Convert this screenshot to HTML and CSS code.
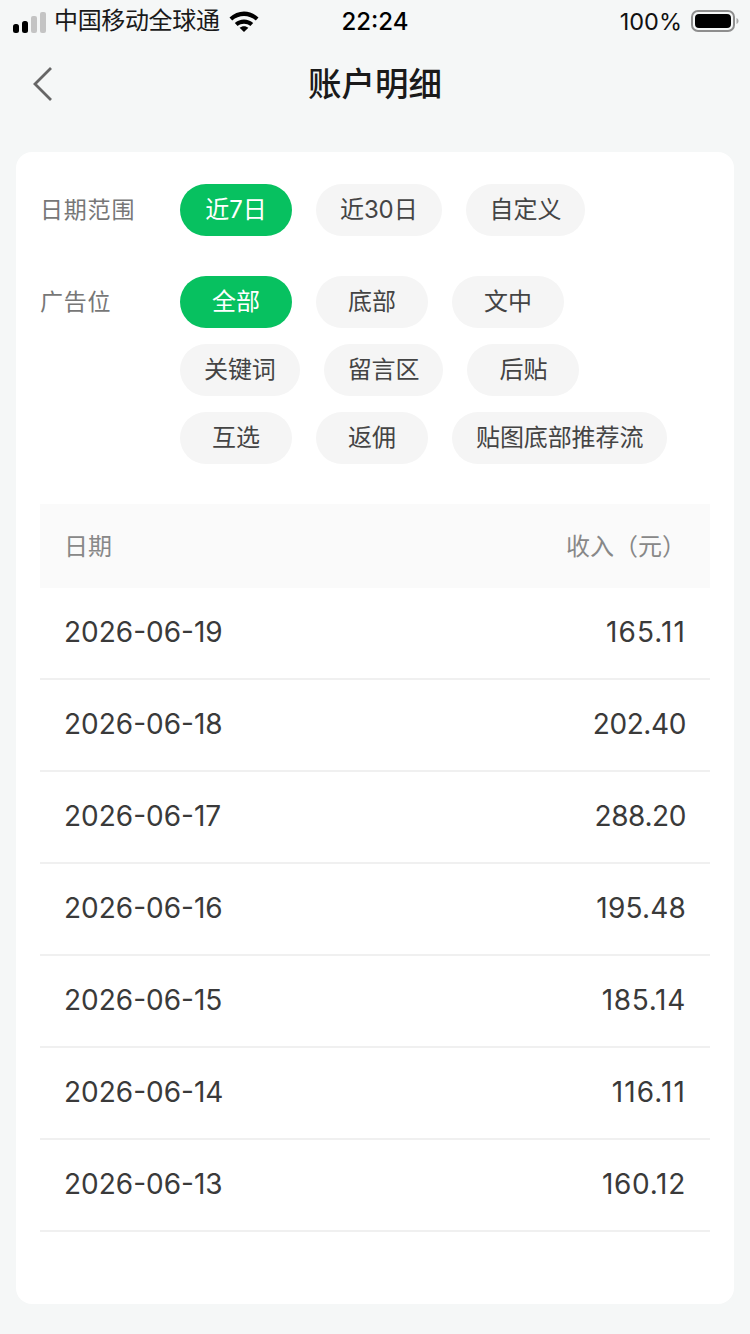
FILE: index.html
```html
<!DOCTYPE html>
<html lang="zh-CN">
<head>
<meta charset="utf-8">
<title>账户明细</title>
<link rel="stylesheet" href="styles.css">
</head>
<body>
<div class="status">
  <div class="status-left">
    <svg class="signal" width="34" height="34" viewBox="0 0 34 34"><rect x="1" y="22" width="6" height="9" rx="2.500" fill="#000"/><rect x="10" y="19" width="6" height="12" rx="2.500" fill="#000"/><rect x="19" y="14" width="6" height="17" rx="2" fill="#c4c4c4"/><rect x="28" y="10" width="6" height="21" rx="2" fill="#c4c4c4"/></svg>
    <span class="carrier">中国移动全球通</span>
    <svg class="wifi" width="30" height="22" viewBox="0 0 30 22"><path d="M.5 7.500C8.800-.5 21.200-.5 29.500 7.500l-2.700 3C20.200 4.500 9.800 4.500 3.200 10.500z" fill="#000"/><path d="M5.800 13C10.800 8.300 19.200 8.300 24.200 13l-2.800 3.100c-3.500-3.200-9.300-3.200-12.800 0z" fill="#000"/><path d="M10.600 17.700c2.500-2.100 6.300-2.100 8.800 0L15 22z" fill="#000"/></svg>
  </div>
  <div class="time">22:24</div>
  <div class="status-right">
    <span class="percent">100%</span>
    <svg class="battery" width="48" height="24" viewBox="0 0 48 24"><rect x="1" y="2" width="42" height="20" rx="6" fill="none" stroke="#8e8e8e" stroke-width="2"/><rect x="4" y="5" width="36" height="14" rx="4" fill="#000"/><path d="M45.500 9v6c1.300-.5 2-1.700 2-3s-.7-2.500-2-3z" fill="#a8a8a8"/></svg>
  </div>
</div>
<header class="nav">
  <svg class="back" width="24" height="36" viewBox="0 0 24 36"><path d="M21 2 5 18l16 16" fill="none" stroke="#666" stroke-width="2.800"/></svg>
  <h1 class="title">账户明细</h1>
</header>
<main class="card">
  <section class="filter">
    <div class="label">日期范围</div>
    <div class="chips">
      <span class="chip on">近7日</span><span class="chip">近30日</span><span class="chip">自定义</span>
    </div>
  </section>
  <section class="filter">
    <div class="label">广告位</div>
    <div class="chips">
      <span class="chip on">全部</span><span class="chip">底部</span><span class="chip">文中</span>
      <span class="chip">关键词</span><span class="chip">留言区</span><span class="chip">后贴</span>
      <span class="chip">互选</span><span class="chip">返佣</span><span class="chip">贴图底部推荐流</span>
    </div>
  </section>
  <section class="table">
    <div class="thead"><span>日期</span><span>收入（元）</span></div>
    <div class="row"><span class="date">2026-06-19</span><span class="amount wider">165.11</span></div>
    <div class="row"><span class="date">2026-06-18</span><span class="amount tight">202.40</span></div>
    <div class="row"><span class="date">2026-06-17</span><span class="amount tight">288.20</span></div>
    <div class="row"><span class="date">2026-06-16</span><span class="amount">195.48</span></div>
    <div class="row"><span class="date">2026-06-15</span><span class="amount wide">185.14</span></div>
    <div class="row"><span class="date">2026-06-14</span><span class="amount wider">116.11</span></div>
    <div class="row"><span class="date">2026-06-13</span><span class="amount wide">160.12</span></div>
  </section>
</main>
</body>
</html>
```
FILE: styles.css
```css
* { box-sizing: border-box; margin: 0; padding: 0; }
html, body { width: 750px; height: 1334px; overflow: hidden; }
body {
  background: #f5f7f7;
  font-family: Inter, "Noto Sans CJK SC", sans-serif;
  color: #333;
}
.status {
  height: 40px;
  display: grid;
  grid-template-columns: 1fr auto 1fr;
  align-items: center;
  padding: 0 11px 0 12px;
  color: #000;
}
.status-left { display: flex; align-items: center; }
.signal { margin-right: 8px; margin-top: -4px; }
.carrier { font-size: 24px; line-height: 42px; color: #1a1a1a; letter-spacing: -.35px; }
.wifi { margin-left: 9px; }
.time { font-size: 24px; font-weight: 500; margin-left: -1px; }
.status-right { display: flex; justify-content: flex-end; align-items: center; gap: 9px; }
.percent { font-size: 23.500px; color: #111; }
.nav {
  height: 88px;
  display: flex;
  align-items: center;
  justify-content: center;
  position: relative;
}
.back { position: absolute; left: 30px; top: 26px; }
.title { font-size: 33.500px; font-weight: 500; color: #1a1a1a; line-height: 90px; }
.card {
  margin: 24px 16px 0;
  height: 1152px;
  background: #fff;
  border-radius: 16px;
  padding: 32px 24px 0;
}
.filter { display: flex; margin-bottom: 40px; }
.label {
  width: 140px;
  flex: none;
  font-size: 23px;
  line-height: 52px;
  color: #777;
  letter-spacing: .8px;
}
.chips { display: flex; flex-wrap: wrap; gap: 16px 24px; width: 500px; }
.chip {
  height: 52px;
  min-width: 112px;
  padding: 0 24px;
  border-radius: 26px;
  background: #f5f5f5;
  font-size: 24px;
  line-height: 52px;
  letter-spacing: -.1px;
  text-align: center;
  color: #444;
}
.chip.on { background: #07c160; color: #fff; }
.thead {
  height: 84px;
  background: #fafafa;
  display: flex;
  justify-content: space-between;
  align-items: center;
  padding: 0 24px 4px;
  font-size: 24px;
  color: #888;
}
.row {
  height: 92px;
  display: flex;
  justify-content: space-between;
  align-items: center;
  padding: 0 24px 2px;
  border-bottom: 2px solid #f0f0f0;
  font-size: 28px;
  color: #3a3a3a;
}
.amount { letter-spacing: .2px; }
.amount.tight { letter-spacing: -.4px; }
.amount.wide { letter-spacing: .7px; }
.amount.wider { letter-spacing: 1.100px; }
```
